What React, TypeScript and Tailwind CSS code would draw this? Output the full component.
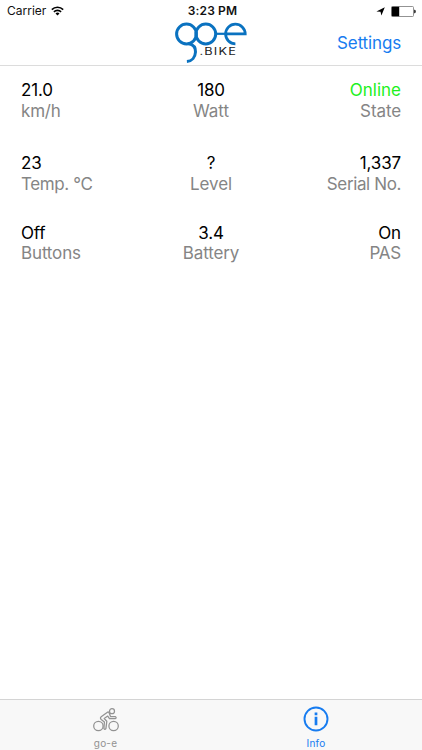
import type { ReactNode } from "react";

const stats = [
  { value: "21.0", label: "km/h", tracking: "tracking-[-0.2px]" },
  { value: "180", label: "Watt", tracking: "tracking-normal" },
  { value: "Online", label: "State", tracking: "tracking-[-0.1px]", online: true },
  { value: "23", label: "Temp. °C", tracking: "tracking-[-0.38px]" },
  { value: "?", label: "Level", tracking: "tracking-[-0.1px]" },
  { value: "1,337", label: "Serial No.", tracking: "tracking-[-0.38px]" },
  { value: "Off", label: "Buttons", tracking: "tracking-[-0.15px]" },
  { value: "3.4", label: "Battery", tracking: "tracking-[-0.1px]" },
  { value: "On", label: "PAS", tracking: "tracking-[-0.25px]" },
];

const align = ["text-left", "text-center", "text-right"];

function StatusBar() {
  return (
    <div className="grid h-[22px] grid-cols-3 items-center pr-[6px] pl-[7px] text-[12px] text-[#111]">
      <div className="flex items-center gap-[5px] tracking-normal">
        Carrier
        <svg width="13" height="10" viewBox="0 0 13 10" fill="none" stroke="#000" strokeWidth="1.6">
          <path d="M0.8 3.6a8.1 8.1 0 0 1 11.4 0" />
          <path d="M2.9 5.9a5.1 5.1 0 0 1 7.2 0" />
          <path d="M6.5 9.6 4.5 7.6a2.8 2.8 0 0 1 4 0z" fill="#000" stroke="none" />
        </svg>
      </div>
      <div className="pl-[2px] text-center font-semibold tracking-[0.15px]">3:23 PM</div>
      <div className="flex items-center justify-end gap-[6px]">
        <svg width="9" height="9" viewBox="0 0 9 9">
          <path d="M8.8 0.2 5.4 8.6 4.5 4.8 0.4 4.4z" fill="#000" />
        </svg>
        <svg width="25" height="11" viewBox="0 0 25 11">
          <rect x="0.5" y="0.5" width="22" height="10" rx="1" fill="#fff" stroke="#777" strokeWidth="0.8" />
          <rect x="0.8" y="0.8" width="7.4" height="9.4" fill="#000" />
          <path d="M23.2 3.7h0.6q0.9 0 0.9 1.8t-0.9 1.8h-0.6z" fill="#111" />
        </svg>
      </div>
    </div>
  );
}

function Logo() {
  return (
    <svg className="justify-self-center" width="74" height="43" viewBox="174 22 74 43" fill="none" stroke="#0a72c0" strokeWidth="3">
      <circle cx="186.5" cy="34" r="9.9" />
      <circle cx="205.8" cy="34" r="9.9" />
      <path d="M215.5 33.8h10" strokeWidth="2.2" />
      <path d="M225.8 33.8h19.4a9.8 9.8 0 1 0-9.8 10" strokeWidth="2.8" />
      <path d="M188.8 43.8c4.8 1 6.9 4.2 6.7 8.2-0.3 5.3-3.5 9.2-8.6 9.5" />
      <text
        x="199.5"
        y="55"
        fill="#222"
        stroke="none"
        fontSize="9.8"
        letterSpacing="0.9"
        fontFamily="Inter, sans-serif"
        textLength="37.5"
        lengthAdjust="spacingAndGlyphs"
      >
        .BIKE
      </text>
    </svg>
  );
}

function Tab({ label, className, children }: { label: string; className: string; children: ReactNode }) {
  return (
    <div className={`flex flex-col items-center ${className}`}>
      <div className="flex h-[37px] items-center pt-px">{children}</div>
      <span className="text-[10px] leading-[12px] tracking-[0.2px]">{label}</span>
    </div>
  );
}

export default function App() {
  return (
    <div className="flex h-screen flex-col bg-white font-['Inter',sans-serif]">
      <header className="h-[66px] border-b border-[#dcdcdc]">
        <StatusBar />
        <div className="grid h-[43px] grid-cols-3">
          <span />
          <Logo />
          <span className="pr-[21px] text-right text-[17px] leading-[43px] tracking-[-0.15px] text-[#177cf0]">Settings</span>
        </div>
      </header>

      <main className="flex-1 px-[21px] pt-[14px]">
        <div className="grid grid-cols-3 grid-rows-[73px_70px_50px] text-[17px]">
          {stats.map((s, i) => (
            <div key={s.label} className={align[i % 3]}>
              <div className={`leading-[20px] ${s.online ? "text-[#1df01d]" : "tracking-[-0.15px] text-black"}`}>{s.value}</div>
              <div className={`text-[#858585] ${i < 6 ? "leading-[22px]" : "leading-[20px]"} ${s.tracking}`}>{s.label}</div>
            </div>
          ))}
        </div>
      </main>

      <footer className="grid h-[51px] grid-cols-2 border-t border-[#d4d4d4] bg-[#f8f8f8]">
        <Tab label="go-e" className="text-[#929292]">
          {/* cyclist */}
          <svg className="mt-px" width="26" height="24" viewBox="0 0 26 24" fill="none" stroke="currentColor" strokeWidth="1.25" strokeLinejoin="round" strokeLinecap="round">
            <circle cx="5.4" cy="18" r="4.7" />
            <circle cx="20.6" cy="18" r="4.7" />
            <circle cx="19" cy="3.2" r="2.5" />
            <path d="M14.8 4 8.2 8.7q-1.5 1.4 0 2.8l3.2 2.6-0.5 6.5q1 1.4 2 0l0.9-7.3-2.6-2.8 3.5-2.4 1.8 2.5h6q1.3-1 0-1.9h-4.9l-1.3-3.5q-0.6-1.4-1.5-1.2z" />
          </svg>
        </Tab>
        <Tab label="Info" className="pr-px text-[#177cf0]">
          <svg width="26" height="26" viewBox="0 0 26 26" fill="none" stroke="currentColor">
            <circle cx="13" cy="13" r="11.5" strokeWidth="1.9" />
            <path d="M13 6.4v2.8M13 10.8v8.4" strokeWidth="2.7" />
          </svg>
        </Tab>
      </footer>
    </div>
  );
}
